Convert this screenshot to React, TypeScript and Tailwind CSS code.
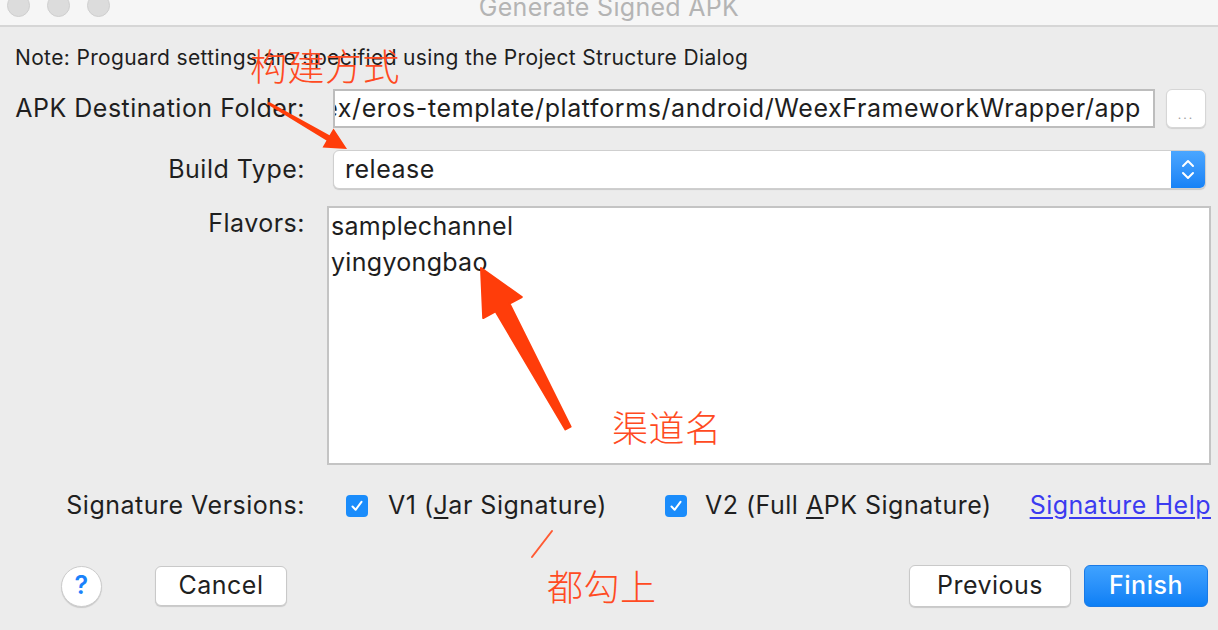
import React from "react";

const ui = "font-['Inter','Liberation_Sans',sans-serif]";
const cjk = "font-['Noto_Sans_CJK_SC',sans-serif]";

function Checkbox() {
  return (
    <span className="w-[22px] h-[22px] rounded-[4px] bg-[#1a8cfb] flex items-center justify-center shrink-0">
      <svg width="14" height="14" viewBox="0 0 14 14">
        <path d="M2.5 7.5 L5.6 10.8 L11.5 2.8" fill="none" stroke="white" strokeWidth="2" strokeLinecap="round" strokeLinejoin="round" />
      </svg>
    </span>
  );
}

function Annotations() {
  return (
    <>
      <svg className="absolute inset-0 pointer-events-none" width="1218" height="630" viewBox="0 0 1218 630">
        {/* arrow to build type */}
        <polygon
          points="268.8,101.7 329.5,135.3 333.5,128.4 347,149 322.5,147.4 326.5,140.5 267.2,104.3"
          fill="#ff3d0a"
        />
        {/* arrow to flavors */}
        <polygon
          points="481,268 521.8,297 509.5,303.7 570.6,426.6 565.4,429.4 495.5,311.3 483.2,318"
          fill="#ff3d0a"
          stroke="#ff3d0a"
          strokeWidth="2"
          strokeLinejoin="round"
        />
        <line x1="532" y1="557" x2="552" y2="531" stroke="#ff5a33" strokeWidth="2" strokeLinecap="round" />
      </svg>
      <div className={`absolute left-[250px] top-[41px] text-[37px] leading-[48px] font-light text-[#ff4a22] ${cjk}`}>构建方式</div>
      <div className={`absolute left-[612px] top-[402px] text-[36px] leading-[48px] font-light text-[#ff4a22] ${cjk}`}>渠道名</div>
      <div className={`absolute left-[547px] top-[561px] text-[36px] leading-[48px] font-light text-[#ff4a22] ${cjk}`}>都勾上</div>
    </>
  );
}

export default function App() {
  return (
    <div className={`relative w-[1218px] h-[630px] overflow-hidden bg-[#ececec] text-[#1f1f1f] text-[25px] tracking-[0.5px] ${ui}`}>
      {/* title bar */}
      <div className="relative h-[27px] bg-[#f6f6f6] border-b-2 border-[#d6d6d6] flex items-start">
        <div className="flex gap-[17px] pl-[7px] -mt-[6px]">
          <span className="w-[23px] h-[23px] rounded-full bg-[#dcdcdc] border border-[#cfcfcf]" />
          <span className="w-[23px] h-[23px] rounded-full bg-[#dcdcdc] border border-[#cfcfcf]" />
          <span className="w-[23px] h-[23px] rounded-full bg-[#dcdcdc] border border-[#cfcfcf]" />
        </div>
        <div className="absolute left-0 right-0 -top-[8px] text-center text-[25px] tracking-[0.3px] leading-[30px] text-[#b4b4b4]">
          Generate Signed APK
        </div>
      </div>

      <div className="pl-[15px] pr-[7px]">
        <div className="mt-[19px] text-[21px] tracking-[0.35px] leading-[24px] text-[#1e1e1e] whitespace-nowrap">
          Note: Proguard settings are specified using the Project Structure Dialog
        </div>

        {/* destination folder */}
        <div className="mt-[19px] flex items-center h-[39px]">
          <div className="w-[290px] text-right whitespace-nowrap">APK Destination Folder:</div>
          <div className="ml-[28px] w-[822px] h-[39px] bg-white border-2 border-[#bdbdbd] overflow-hidden flex items-center justify-end pr-[12px]">
            <span className="whitespace-nowrap tracking-[0.6px] text-[#1e1e1e]">
              Weex/eros-template/platforms/android/WeexFrameworkWrapper/app
            </span>
          </div>
          <div className="ml-[11px] w-[40px] h-[39px] bg-white rounded-[6px] border border-[#d6d6d6] shadow-[0_1px_1px_rgba(0,0,0,0.12)] flex items-end justify-center pb-[6px]">
            <span className="text-[12px] leading-[12px] tracking-[2px] text-[#a0a0a0]">...</span>
          </div>
        </div>

        {/* build type */}
        <div className="mt-[22px] flex items-center h-[39px]">
          <div className="w-[290px] text-right">Build Type:</div>
          <div className="ml-[28px] w-[873px] h-[39px] bg-white rounded-[6px] border border-[#cfcfcf] shadow-[0_1px_1px_rgba(0,0,0,0.15)] flex items-stretch overflow-hidden">
            <span className="flex-1 flex items-center pl-[11px] text-[#1e1e1e]">release</span>
            <span className="w-[34px] bg-gradient-to-b from-[#4aa6ff] to-[#1682f6] flex flex-col items-center justify-center gap-[3px]">
              <svg width="14" height="9" viewBox="0 0 14 9">
                <path d="M2 7 L7 2 L12 7" fill="none" stroke="white" strokeWidth="2" strokeLinecap="round" strokeLinejoin="round" />
              </svg>
              <svg width="14" height="9" viewBox="0 0 14 9">
                <path d="M2 2 L7 7 L12 2" fill="none" stroke="white" strokeWidth="2" strokeLinecap="round" strokeLinejoin="round" />
              </svg>
            </span>
          </div>
        </div>

        {/* flavors */}
        <div className="mt-[17px] flex items-start">
          <div className="w-[290px] text-right leading-[34px]">Flavors:</div>
          <div className="ml-[22px] w-[884px] h-[259px] bg-white border-2 border-[#c4c4c4] pl-[2px] pt-0 tracking-[0.3px]">
            <div className="leading-[36px] text-[#1e1e1e]">samplechannel</div>
            <div className="leading-[36px] text-[#1e1e1e]">yingyongbao</div>
          </div>
        </div>

        {/* signature versions */}
        <div className="mt-[24px] flex items-center h-[34px]">
          <div className="w-[290px] text-right whitespace-nowrap">Signature Versions:</div>
          <div className="ml-[41px] flex items-center gap-[20px]">
            <Checkbox />
            <span className="whitespace-nowrap">
              V1 (<span className="underline underline-offset-[3px]">J</span>ar Signature)
            </span>
          </div>
          <div className="ml-[58px] flex items-center gap-[18px]">
            <Checkbox />
            <span className="whitespace-nowrap">
              V2 (Full <span className="underline underline-offset-[3px]">A</span>PK Signature)
            </span>
          </div>
          <span className="ml-auto text-[#3b3bf0] underline underline-offset-[3px] whitespace-nowrap">
            Signature Help
          </span>
        </div>

        {/* buttons */}
        <div className="mt-[42px] mr-[3px] flex items-center h-[42px]">
          <div className="ml-[46px] w-[41px] h-[41px] rounded-full bg-white border border-[#cccccc] shadow-[0_1px_1px_rgba(0,0,0,0.15)] flex items-center justify-center font-semibold text-[#1a82fb]">
            ?
          </div>
          <div className="ml-[53px] w-[132px] h-[40px] bg-white rounded-[6px] border border-[#c9c9c9] shadow-[0_1px_1px_rgba(0,0,0,0.15)] flex items-center justify-center">
            Cancel
          </div>
          <div className="ml-auto w-[162px] h-[42px] bg-white rounded-[6px] border border-[#c9c9c9] shadow-[0_1px_1px_rgba(0,0,0,0.15)] flex items-center justify-center">
            Previous
          </div>
          <div className="ml-[13px] w-[124px] h-[42px] rounded-[6px] bg-gradient-to-b from-[#3fa2ff] to-[#0b7ff5] border border-[#1a7ae6] flex items-center justify-center font-medium text-white">
            Finish
          </div>
        </div>
      </div>

      <Annotations />
    </div>
  );
}
